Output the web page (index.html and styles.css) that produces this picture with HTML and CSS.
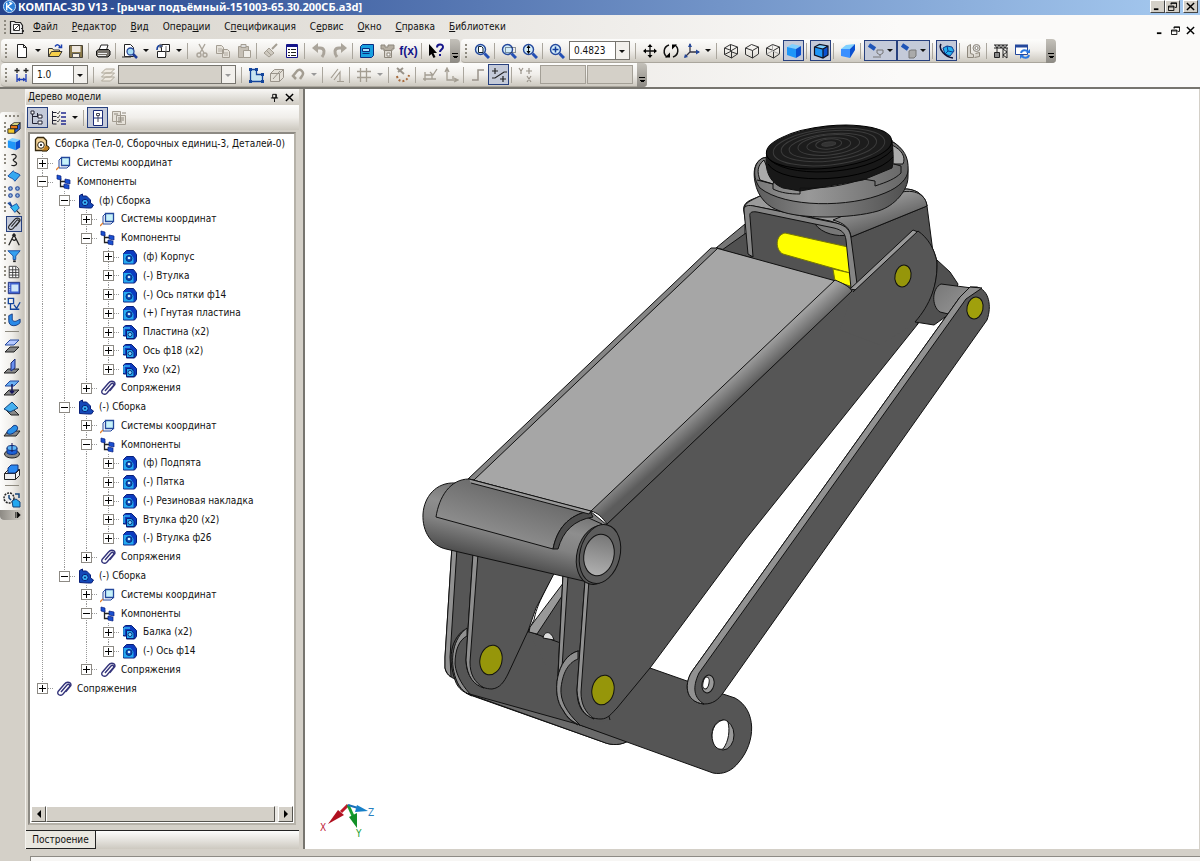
FILE: index.html
```
<!DOCTYPE html>
<html lang="ru">
    <head>
        <meta charset="UTF-8"/>
        <meta name="viewport" content="width=device-width, initial-scale=1">
        <title>КОМПАС-3D V13</title>
        <link rel="stylesheet" href="styles.css">
    </head>
    <body>
        <svg class="Sprite" aria-hidden="true">
            <!-- standard toolbar -->
            <symbol id="new" viewBox="0 0 16 16"><path d="M3.500 1.500h6l3 3v10h-9zM9.500 1.500v3h3" fill="#fff" stroke="#222"/></symbol>
            <symbol id="open" viewBox="0 0 16 16"><path d="M1.500 13.500v-8h4l1 1.500h6v2" fill="#ffe9a0" stroke="#333"/><path d="M1.500 13.500l3-5h10.500l-3 5z" fill="#f5cf4a" stroke="#333"/><path d="M8 3.500c2-2.500 4-2 5 .5M11.500 4.500h3v-3" fill="none" stroke="#1a3fb0" stroke-width="1.500"/></symbol>
            <symbol id="save" viewBox="0 0 16 16"><path d="M1.500 2.500h13v12h-13z" fill="#8a7a4a" stroke="#4a4436"/><path d="M4 3h8.500v6h-8.500z" fill="#eee8e0"/><path d="M4.500 10.500h7v4h-7z" fill="#f4efe4" stroke="#555"/></symbol>
            <symbol id="print" viewBox="0 0 16 16"><path d="M4 7l2-5h7l-1.500 5" fill="#fff" stroke="#222"/><path d="M1.500 8l2-1.500h10l1.500 1.500v4l-2 2h-10l-1.500-1.500z" fill="#77736c" stroke="#111"/><path d="M3 10.500h9M3 12.500h8" stroke="#eee"/></symbol>
            <symbol id="preview" viewBox="0 0 16 16"><path d="M2.500 1.500h6l3 3v9h-9z" fill="#fff" stroke="#222"/><circle cx="8.500" cy="8.500" r="3.500" fill="#a8dcf4" stroke="#2a4a9a" stroke-width="1.300"/><path d="M11 11l4 4" stroke="#1e3c96" stroke-width="2.500"/><path d="M0 14h9" stroke="#333"/></symbol>
            <symbol id="layout" viewBox="0 0 16 16"><path d="M6.500 1.500h8v7h-8zM2.500 8.500h8v6h-8z" fill="#fff" stroke="#222"/><path d="M2 7c0-4 2-5 4-4" fill="none" stroke="#123c9c" stroke-width="1.600"/><path d="M5 1l3 2-3 2zM11 3v10" fill="#123c9c" stroke="#777"/></symbol>
            <symbol id="cut" viewBox="0 0 16 16"><g fill="none" stroke="#aaa49a" stroke-width="1.400"><path d="M5 1l5 9M11 1l-5 9"/><circle cx="5" cy="12" r="2"/><circle cx="11" cy="12" r="2"/></g></symbol>
            <symbol id="copy" viewBox="0 0 16 16"><path d="M1.500 2.500h5l2 2v6h-7zM7.500 6.500h5l2 2v6h-7z" fill="#e6e2da" stroke="#a39d92"/><path d="M3 6h4M3 8h4M9 10h4M9 12h4" stroke="#b0aaa0"/></symbol>
            <symbol id="paste" viewBox="0 0 16 16"><path d="M2.500 3.500h10v11h-10z" fill="#c6c0b6" stroke="#a39d92"/><path d="M5 1.500h5v3h-5z" fill="#ddd" stroke="#a39d92"/><path d="M7.500 7.500h7v7h-7z" fill="#f0eee9" stroke="#a39d92"/></symbol>
            <symbol id="brush" viewBox="0 0 16 16"><path d="M14 1l-5 5" stroke="#a39d92" stroke-width="2"/><path d="M6 5l5 5-5 4-5-4z" fill="#cfcac0" stroke="#a39d92"/><path d="M4 8l4 4" stroke="#a39d92"/></symbol>
            <symbol id="props" viewBox="0 0 16 16"><path d="M2.500 1.500h11v13h-11z" fill="#fff" stroke="#15158a"/><path d="M3 2.500h10" stroke="#15158a" stroke-width="3"/><path d="M4 6.500h2M4 9.500h2M4 12.500h2M7 6.500h5M7 9.500h5M7 12.500h5" stroke="#222"/></symbol>
            <symbol id="undo" viewBox="0 0 16 16"><path d="M5 5h4c5 0 5 5 2 9" fill="none" stroke="#aaa49a" stroke-width="3"/><path d="M7 0v10l-6-5z" fill="#aaa49a"/></symbol>
            <symbol id="redo" viewBox="0 0 16 16"><path d="M11 5h-4c-5 0-5 5-2 9" fill="none" stroke="#aaa49a" stroke-width="3"/><path d="M9 0v10l6-5z" fill="#aaa49a"/></symbol>
            <symbol id="vars" viewBox="0 0 16 16"><path d="M1.500 3.500l2-2h11v11l-2 2h-11z" fill="#18a0e0" stroke="#0a2c80"/><path d="M3.500 5.500h7v3h-7zM3.500 10.500h7" fill="#a8e4ff" stroke="#0a2c80"/></symbol>
            <symbol id="part" viewBox="0 0 16 16"><path d="M1 2h4v2h3v-2h6v4h-2v2h-8v-2h-3z" fill="#b5aea2" stroke="#8d877c"/><path d="M4.500 7.500h7v7h-7z" fill="#ddd9d2" stroke="#8d877c"/><path d="M7 10h3v3h-3z" fill="#fff" stroke="#8d877c"/></symbol>
            <symbol id="help" viewBox="0 0 16 16"><path d="M1 1l8 9h-3.500l2 4-2 1-2-4-2.500 2z" fill="#000"/><path d="M9 4.500c0-4 6-4 6-.5 0 2.500-3 2.500-3 5" fill="none" stroke="#15158a" stroke-width="2"/><path d="M11 11h2v2h-2z" fill="#15158a"/></symbol>
            <!-- view toolbar -->
            <symbol id="lens" viewBox="0 0 16 16"><circle cx="6.500" cy="6.500" r="5" fill="#d3ecf8" stroke="#24489c" stroke-width="1.400"/><path d="M10.500 10.500l4.500 4.500" stroke="#2450b4" stroke-width="3"/></symbol>
            <symbol id="zpage" viewBox="0 0 16 16"><use href="#lens"/><path d="M4.500 3.500h3l1.500 1.500v4.500h-4.500z" fill="#fff" stroke="#123"/></symbol>
            <symbol id="zarea" viewBox="0 0 16 16"><use href="#lens"/><path d="M4.500 4.500h10v5h-10z" fill="none" stroke="#234" stroke-dasharray="1 1"/></symbol>
            <symbol id="zfit" viewBox="0 0 16 16"><use href="#lens"/><path d="M6.500 3v7" stroke="#111"/><path d="M4.500 5l2-3 2 3zM4.500 8l2 3 2-3z"/></symbol>
            <symbol id="zplus" viewBox="0 0 16 16"><use href="#lens"/><path d="M6.500 3.500v6M3.500 6.500h6" stroke="#123c9c" stroke-width="1.500"/></symbol>
            <symbol id="move" viewBox="0 0 16 16"><path d="M8 2v12M2 8h12" stroke="#111" stroke-width="1.300"/><path d="M8 1l2.500 3h-5zM8 15l2.500-3h-5zM1 8l3-2.500v5zM15 8l-3-2.500v5z"/></symbol>
            <symbol id="rotate" viewBox="0 0 16 16"><path d="M6 2c-6 2-6 9-2 12M10 14c6-2 6-9 2-12" fill="none" stroke="#111" stroke-width="1.500"/><path d="M2 14.500h5v-5zM14 1.500h-5v5z"/></symbol>
            <symbol id="axes" viewBox="0 0 16 16"><path d="M6 1v8l-5 5M6 9h9" fill="none" stroke="#334" stroke-width="1.300"/><path d="M4 4l2-4 2 4zM12 6.500l4 2.500-4 2.500zM0 15l1-4 3 3z" fill="#24489c"/></symbol>
            <symbol id="cube1" viewBox="0 0 16 16"><path d="M1.500 5l6-3.500 7 2.500v7l-6 4-7-3.500zM1.500 5l7 2.500 6-3.500M8.500 7.500v7.500M7.500 1.500v7l-6 3M7.500 8.500l7 2.500" fill="none" stroke="#333"/></symbol>
            <symbol id="cube2" viewBox="0 0 16 16"><path d="M1.500 5l6-3.500 7 2.500v7l-6 4-7-3.500zM1.500 5l7 2.500 6-3.500M8.500 7.500v7.500" fill="none" stroke="#333"/></symbol>
            <symbol id="cube3" viewBox="0 0 16 16"><use href="#cube2"/><path d="M7.500 2v6l-6 3M7.500 8l7 3" fill="none" stroke="#aaa"/></symbol>
            <symbol id="cube4" viewBox="0 0 16 16"><path d="M1 4l5-3 9 2-5 3z" fill="#7fd0ff"/><path d="M1 4l9 2v9l-9-3z" fill="#1e96f8"/><path d="M10 6l5-3v9l-5 3z" fill="#0a50d0"/></symbol>
            <symbol id="cube5" viewBox="0 0 16 16"><use href="#cube4"/><path d="M1.500 4l5-2.500 8.500 1.500v9l-5 3-8.500-3zM1.500 4l8.500 2 5-3M10 6v9" fill="none" stroke="#112" stroke-width="1.200"/></symbol>
            <symbol id="persp" viewBox="0 0 16 16"><path d="M1 6l5-4 9-1-5 5z" fill="#7fd0ff"/><path d="M1 6h9v9l-9-2z" fill="#3a90ff"/><path d="M10 6l5-5v6l-5 8z" fill="#0a50d0"/></symbol>
            <symbol id="hide1" viewBox="0 0 16 16"><path d="M1 2l6 4" stroke="#1f55b8" stroke-width="4"/><path d="M9 7h6v3l-3 2-3-2zM12 12v3M5 14h6" fill="none" stroke="#777"/></symbol>
            <symbol id="hide2" viewBox="0 0 16 16"><path d="M1 2l6 4" stroke="#1f55b8" stroke-width="4"/><path d="M8 8l2-1h5v6l-2 2h-5z" fill="#aaa" stroke="#777"/></symbol>
            <symbol id="orbit" viewBox="0 0 16 16"><path d="M4 5l4-2 5 1 2 4-4 5-5-2z" fill="#25b0ee" stroke="#0a3c90"/><path d="M8 3l1 5 5 1M9 8l-3 3" stroke="#0a3c90" fill="none"/><path d="M2 1c-3 5 4 13 12 14" fill="none" stroke="#113" stroke-width="1.500"/></symbol>
            <symbol id="sect" viewBox="0 0 16 16"><path d="M1.500 14.500v-11l3-2v9l3 1v3zM8.500 14.500l5-1v-4l-4 1" fill="#d8d4cc" stroke="#8d877c"/><circle cx="10.500" cy="5" r="3.500" fill="#ddd" stroke="#8d877c"/><circle cx="10.500" cy="5" r="1.500" fill="#fff" stroke="#8d877c"/></symbol>
            <symbol id="crane" viewBox="0 0 16 16"><path d="M1 2h14M1 5h14M2 2l2 3 2-3 2 3 2-3 2 3 2-3M10 5v10M14 5v10M10 6l4 3-4 3 4 3M4 5v4" fill="none" stroke="#222"/><path d="M1.500 9.500h5v5h-5z" fill="#888" stroke="#222"/></symbol>
            <symbol id="refresh" viewBox="0 0 16 16"><path d="M1.500 2.500h12v9h-12z" fill="#fff" stroke="#24489c"/><path d="M1 3h13" stroke="#24489c" stroke-width="3"/><path d="M7 10c1-4 6-3 7-1M15 12c-1 4-6 3-7 1" fill="none" stroke="#2a78e0" stroke-width="2"/><path d="M16 6v4h-4zM6 16v-4h4z" fill="#2a78e0"/></symbol>
            <!-- current state toolbar -->
            <symbol id="step" viewBox="0 0 16 16"><path d="M3 1v5M.500 3.500h5M12 1v5M9.500 3.500h5" stroke="#222" stroke-width="1.300"/><path d="M3 7v8M12 7v8M3 12.500h9" stroke="#1f3fb8" stroke-width="1.300"/><path d="M3 12.500l3-2v4zM12 12.500l-3-2v4z" fill="#1f3fb8"/></symbol>
            <symbol id="layers" viewBox="0 0 16 16"><path d="M1.500 14l4-4h9l-4 4zM1.500 10l4-4h9l-4 4zM1.500 6l4-4h9l-4 4z" fill="#eee9e0" stroke="#b0aa9c"/></symbol>
            <symbol id="sketch" viewBox="0 0 16 16"><path d="M2.500 2.500h6v5h6v7h-12z" fill="#c8e4f0" stroke="#14459c" stroke-width="1.300"/><path d="M1 1h3v3h-3zM7 1h3v3h-3zM13 6h3v3h-3zM13 13h3v3h-3zM1 13h3v3h-3z" fill="#14459c"/></symbol>
            <symbol id="edit3d" viewBox="0 0 16 16"><path d="M1.500 6.500l4-4h9v8l-4 4h-9zM1.500 6.500h9v8M10.500 6.500l4-4M4 12l7-8" fill="#e4e0d8" stroke="#99938a"/></symbol>
            <symbol id="magnet" viewBox="0 0 16 16"><path d="M6 12l-3-3 4-5c3-3 8 1 5 5l-2 3" fill="none" stroke="#a39d92" stroke-width="2.500"/></symbol>
            <symbol id="perp" viewBox="0 0 16 16"><path d="M2 11l7-9M5 13l6-8v9M8 14.500h7" fill="none" stroke="#a39d92" stroke-width="1.200"/></symbol>
            <symbol id="grid" viewBox="0 0 16 16"><path d="M4.500 1v14M10.500 1v14M1 4.500h14M1 10.500h14" stroke="#a39d92" stroke-width="1.300"/></symbol>
            <symbol id="round" viewBox="0 0 16 16"><path d="M2 1l7 6M3 5l5-4" stroke="#99938a" stroke-width="2"/><path d="M2 9c1 7 10 7 12-1" fill="none" stroke="#a86a3c" stroke-width="2" stroke-dasharray="2 2"/></symbol>
            <symbol id="ortho" viewBox="0 0 16 16"><path d="M3 5v9M1 12h13M3 8h7v4M8 5l3 3 4-6" fill="none" stroke="#a39d92" stroke-width="1.300"/></symbol>
            <symbol id="lcs" viewBox="0 0 16 16"><path d="M4 2v11h10M2 5l2-4 2 4M11 11l4 2-4 2M10 9v3" fill="none" stroke="#a39d92" stroke-width="1.300"/></symbol>
            <symbol id="corner" viewBox="0 0 16 16"><path d="M2 13h6v-10h6" fill="none" stroke="#99938a" stroke-width="1.500"/></symbol>
            <symbol id="snap" viewBox="0 0 16 16"><path d="M4 1v6M1 4h6M12 9v6M9 12h6M1 11h3l9-6h3" fill="none" stroke="#222" stroke-width="1.200"/></symbol>
            <symbol id="xy" viewBox="0 0 16 16"><path d="M1 1l2 3 2-3M3 4v3M11 1v6M8 4h6M9 9l4 6M13 9l-4 6" fill="none" stroke="#99938a" stroke-width="1.200"/></symbol>
            <!-- tree icons -->
            <symbol id="doc" viewBox="0 0 16 16"><path d="M1.500 14.500v-11l2-2h6l3 3v10z" fill="#f3d49a" stroke="#33270f" stroke-width="1.300"/><circle cx="7" cy="9" r="3.300" fill="#fff" stroke="#33270f"/><circle cx="7" cy="9" r="1" /><path d="M12 9l3 2v2l-2 2h-5" fill="#c08020" stroke="#33270f"/></symbol>
            <symbol id="docgray" viewBox="0 0 16 16"><path d="M1.500 14.500v-12h4l1 1h5l2 3v8z" fill="#eee" stroke="#222" stroke-width="1.200"/><path d="M4.500 5.500h6v6h-6z" fill="#fff" stroke="#333"/><path d="M5 11l5-5M12 9l3 3-3 3" fill="none" stroke="#333"/></symbol>
            <symbol id="cs" viewBox="0 0 16 16"><path d="M5.500 2.500h8v8h-8z" fill="#c6f2fa" stroke="#24489c" stroke-width="1.300"/><path d="M5 3l-2 2v8h8l2-2" fill="none" stroke="#24489c"/><path d="M0 15l3-3" stroke="#e08030" stroke-width="1.300"/></symbol>
            <symbol id="comp" viewBox="0 0 16 16"><path d="M4.500 4v8.500h4M4.500 7.500h5" fill="none" stroke="#222" stroke-width="1.300"/><path d="M1 1l4 1v4l-4-1zM9 5l5 1v4l-5-1zM8 10l5 1v4l-5-1z" fill="#1a4fd0" stroke="#0a2080" stroke-width=".700"/></symbol>
            <symbol id="asm" viewBox="0 0 16 16"><path d="M1.500 14.500v-12l3-1.500v2h4l4 4v3l3 2-2 3h-4z" fill="#1448b8" stroke="#081f78"/><circle cx="7" cy="9.500" r="3.200" fill="#38b0f4" stroke="#081f78"/><circle cx="7" cy="9.500" r="1" fill="#081f78"/></symbol>
            <symbol id="det" viewBox="0 0 16 16"><path d="M1.500 4.500l3-3h7l3 4v7l-2 2.500h-11z" fill="#0d3cc0" stroke="#081f78"/><path d="M1.500 5h7l3 4v5.500h-10z" fill="#25a8f0"/><circle cx="7" cy="9.500" r="3" fill="#0a48b8" stroke="#083080"/><circle cx="7" cy="9" r="1.300" fill="#d8f4ff"/></symbol>
            <symbol id="det2" viewBox="0 0 16 16"><path d="M1.500 12v-9l2-1.500h6l5 5v6l-2 2.500h-8v-3z" fill="#0d3cc0" stroke="#081f78"/><path d="M2 4h6M2 4v7" stroke="#38b4f4" stroke-width="1.400"/><path d="M4.500 6.500h5l2.500 3v5h-7.500z" fill="#25a8f0" stroke="#081f78"/><circle cx="8" cy="10.500" r="2" fill="#7cd8ff" stroke="#083080"/></symbol>
            <symbol id="clip" viewBox="0 0 16 16"><path d="M5 11l6-7c1.500-1.500 3.500 0 2.300 1.700l-6.500 7.500c-2.500 2.500-6.500 0-4.500-3l6-7c3-3.500 7.500-1.500 6.500 1.500l-5 6" fill="none" stroke="#33337a" stroke-width="1.400"/></symbol>
            <symbol id="treemode" viewBox="0 0 16 16"><path d="M2.500 1v12.500h5M2.500 6.500h5M7.500 3v4" fill="none" stroke="#223"/><path d="M1 1h3v3h-3zM8 5h4v3h-4zM8 11h4v3h-4z" fill="#fff" stroke="#223"/></symbol>
            <symbol id="listmode" viewBox="0 0 16 16"><path d="M1.500 1v13M1.500 2.500h4M1.500 6.500h4M1.500 10.500h4M1.500 14h4" stroke="#223"/><path d="M6 3l1 1 2-3M6 7l1 1 2-3M6 11l1 1 2-3" fill="none" stroke="#555"/><path d="M10 3h5M10 7h5M10 11h5M10 14h5" stroke="#222a90" stroke-width="1.600"/></symbol>
            <symbol id="page" viewBox="0 0 16 16"><path d="M3.500 .500h9v15h-9zM3.500 8h9" fill="#fff" stroke="#1c2c78"/><path d="M6.500 3.500h3v2h-3zM8 5v7" fill="none" stroke="#445"/></symbol>
            <symbol id="report" viewBox="0 0 16 16"><path d="M1.500 1.500h8v10h-8zM5.500 5.500h9v9h-9z" fill="#e6e2da" stroke="#a39d92"/><path d="M3 4h4M7 8h6M7 10h6M7 12h4M11 3h4" stroke="#8d877c"/></symbol>
            <!-- compact panel icons -->
            <symbol id="p1" viewBox="0 0 16 16"><path d="M4 5l4-3h7l-3 3z" fill="#ff9" stroke="#222"/><path d="M4 5h8v4h-8z" fill="#e87818" stroke="#222"/><path d="M1 9h8v5h-8z" fill="#f4c828" stroke="#222"/><path d="M12 5l3-3v7l-6 5v-5h3z" fill="#2a60d8" stroke="#222"/></symbol>
            <symbol id="p3" viewBox="0 0 16 16"><path d="M5 2c6-2 7 3 3 5-3 2 3 3 3 5s-3 3-6 2" fill="none" stroke="#222" stroke-width="1.400"/></symbol>
            <symbol id="p4" viewBox="0 0 16 16"><path d="M1 8l6-6c2 3 5 2 8 5l-6 7c-2-4-5-3-8-6z" fill="#35a8f0" stroke="#14459c"/></symbol>
            <symbol id="p5" viewBox="0 0 16 16"><g fill="#9bd" stroke="#24489c" stroke-width="1.300"><circle cx="4" cy="4" r="2"/><circle cx="12" cy="4" r="2"/><circle cx="4" cy="12" r="2"/><circle cx="12" cy="12" r="2"/></g></symbol>
            <symbol id="p6" viewBox="0 0 16 16"><path d="M1 2l8 8M3 1l3 6" stroke="#14459c" stroke-width="1.500"/><path d="M4 7l7-4 3 5-5 5z" fill="#35b8f0" stroke="#14459c"/><path d="M11 11l4 4" stroke="#222" stroke-width="1.500"/></symbol>
            <symbol id="p7" viewBox="0 0 16 16"><path d="M5 11l6-7c1.500-1.500 3.500 0 2.300 1.700l-6.500 7.500c-2.500 2.500-6.500 0-4.500-3l6-7c3-3.500 7.500-1.500 6.500 1.500l-5 6" fill="none" stroke="#222" stroke-width="1.200"/></symbol>
            <symbol id="p8" viewBox="0 0 16 16"><path d="M6 3l2-2 2 2M8 2l-6 12M8 2l6 12M6 7c2 2 3 2 4 0" fill="none" stroke="#222" stroke-width="1.500"/></symbol>
            <symbol id="p9" viewBox="0 0 16 16"><path d="M1 2h14l-5 6v4h-3v-4z" fill="#35a0f0" stroke="#14459c"/><path d="M7 13h3v2h-3z" fill="#222"/></symbol>
            <symbol id="p10" viewBox="0 0 16 16"><path d="M2.500 1.500h8l3 3v10h-11zM2.500 5.500h11M2.500 8.500h11M2.500 11.500h11M6.500 2v12M10 2v12" fill="#fff" stroke="#333"/></symbol>
            <symbol id="p11" viewBox="0 0 16 16"><path d="M1.500 1.500h13v13h-13z" fill="#3f62d0" stroke="#1c2c78"/><path d="M5 4h8v8h-8z" fill="#cfe6f8"/><path d="M3 3v10" stroke="#fff" stroke-dasharray="1 1"/></symbol>
            <symbol id="p12" viewBox="0 0 16 16"><path d="M1.500 1.500h6v6h-6zM4 8v6h10M8 9l3 4 4-7" fill="none" stroke="#14459c" stroke-width="1.500"/></symbol>
            <symbol id="p13" viewBox="0 0 16 16"><path d="M2 3l4-2v7c3 3 5 1 9-1v4c-4 5-13 5-13-2z" fill="#2a8ae8" stroke="#14357c"/></symbol>
            <symbol id="q1" viewBox="0 0 18 18"><path d="M2 8l5-5h9l-5 5z" fill="#b4c8ff" stroke="#24489c"/><path d="M2 15l5-5h9l-5 5z" fill="#888" stroke="#222"/></symbol>
            <symbol id="q2" viewBox="0 0 18 18"><path d="M1 15l4-4h11l-4 4z" fill="#888" stroke="#222"/><path d="M8 13v-8l4-4v9z" fill="#6a90f0" stroke="#1c2c78"/></symbol>
            <symbol id="q3" viewBox="0 0 18 18"><path d="M2 7l5-5h9l-5 5z" fill="#6ab0f4" stroke="#24489c"/><path d="M1 16l5-5h10l-5 5z" fill="#888" stroke="#222"/><path d="M9 5v9M7 12l2 2 2-2" fill="none" stroke="#14145c" stroke-width="1.500"/></symbol>
            <symbol id="q4" viewBox="0 0 18 18"><path d="M3 10l5 5h8l-5-5" fill="#888" stroke="#222"/><path d="M1 9l8-7 6 6-8 4z" fill="#45b0f0" stroke="#14457c"/></symbol>
            <symbol id="q5" viewBox="0 0 18 18"><path d="M1 15l4-5h12l-4 5z" fill="#888" stroke="#222"/><path d="M4 12c0-4 3-3 6-7 3-2 6 1 4 4-3 3-7 6-10 3z" fill="#2a90e8" stroke="#14357c"/></symbol>
            <symbol id="q6" viewBox="0 0 18 18"><ellipse cx="9" cy="12" rx="7.500" ry="4" fill="#888" stroke="#222"/><path d="M4 6v5c2 2 8 2 10 0v-5z" fill="#1c60d8" stroke="#14357c"/><ellipse cx="9" cy="6" rx="5" ry="2.500" fill="#60b8f8" stroke="#14357c"/><path d="M9 1v9" stroke="#14145c"/></symbol>
            <symbol id="q7" viewBox="0 0 18 18"><path d="M1.500 10.500l4-4h11v6l-4 4h-11zM1.500 10.500h11v6M12.500 10.500l4-4" fill="#eee" stroke="#222"/><path d="M5 9v-4l3-3h7v5l-3 3h-7z" fill="#2a88f0" stroke="#14357c"/></symbol>
            <symbol id="q8" viewBox="0 0 18 18"><circle cx="6" cy="7" r="5" fill="#eee" stroke="#222" stroke-width="1.500" stroke-dasharray="2 1"/><path d="M6 4v3l2 2M12 3h4v4" fill="none" stroke="#14457c" stroke-width="1.500"/><path d="M9 10l4-2 4 3v5h-7z" fill="#22a8f0" stroke="#14457c"/></symbol>
        </svg>

        <header class="Title">
            <svg viewBox="0 0 14 14"><circle cx="7" cy="7" r="6.500" fill="#2a7fd8" stroke="#cfe8ff"/><path d="M4 3v8M10 3l-5 4 5 4M7 2l2 3" fill="none" stroke="#fff" stroke-width="1.500"/></svg>
            <h1>КОМПАС-3D V13 - [рычаг подъёмный-151003-65.30.200СБ.a3d]</h1>
            <div class="Caption">
                <button aria-label="Свернуть"><svg viewBox="0 0 10 10"><path d="M1 8h5" stroke="#000" stroke-width="2"/></svg></button>
                <button aria-label="Восстановить"><svg viewBox="0 0 10 10"><path d="M3.500 3v-2h6v5h-2M3 1.500h7M.500 4.500h6v5h-6zM0 5.500h7" fill="none" stroke="#000"/></svg></button>
                <button class="Close" aria-label="Закрыть"><svg viewBox="0 0 10 10"><path d="M1 1l8 8M9 1l-8 8" stroke="#000" stroke-width="1.600"/></svg></button>
            </div>
        </header>
        <div class="Chrome">
            <nav class="Menu">
                <i class="Grip"></i>
                <svg class="Icon"><use href="#docgray"/></svg>
                <button><u>Ф</u>айл</button>
                <button><u>Р</u>едактор</button>
                <button><u>В</u>ид</button>
                <button>Опера<u>ц</u>ии</button>
                <button>С<u>п</u>ецификация</button>
                <button>С<u>е</u>рвис</button>
                <button><u>О</u>кно</button>
                <button><u>С</u>правка</button>
                <button><u>Б</u>иблиотеки</button>
                <div class="Caption Flat">
                    <button aria-label="Свернуть документ"><svg viewBox="0 0 10 10"><path d="M1 8h5" stroke="#000" stroke-width="2"/></svg></button>
                    <button aria-label="Восстановить документ"><svg viewBox="0 0 10 10"><path d="M3.500 3v-2h6v5h-2M3 1.500h7M.500 4.500h6v5h-6zM0 5.500h7" fill="none" stroke="#000"/></svg></button>
                    <button aria-label="Закрыть документ"><svg viewBox="0 0 10 10"><path d="M1 1l8 8M9 1l-8 8" stroke="#000" stroke-width="1.600"/></svg></button>
                </div>
            </nav>
            <div class="Bars">
                <div class="Bar" role="toolbar" aria-label="Стандартная">
                    <i class="Grip"></i>
                    <button class="Tool" aria-label="Создать"><svg class="Icon"><use href="#new"/></svg></button><button class="Drop" aria-label="Ещё"></button>
                    <button class="Tool" aria-label="Открыть"><svg class="Icon"><use href="#open"/></svg></button>
                    <button class="Tool" aria-label="Сохранить"><svg class="Icon"><use href="#save"/></svg></button>
                    <i class="Sep"></i>
                    <button class="Tool" aria-label="Печать"><svg class="Icon"><use href="#print"/></svg></button>
                    <i class="Sep"></i>
                    <button class="Tool" aria-label="Просмотр"><svg class="Icon"><use href="#preview"/></svg></button><button class="Drop" aria-label="Ещё"></button>
                    <button class="Tool" aria-label="Компоновка"><svg class="Icon"><use href="#layout"/></svg></button><button class="Drop" aria-label="Ещё"></button>
                    <i class="Sep"></i>
                    <button class="Tool" aria-label="Вырезать"><svg class="Icon"><use href="#cut"/></svg></button>
                    <button class="Tool" aria-label="Копировать"><svg class="Icon"><use href="#copy"/></svg></button>
                    <button class="Tool" aria-label="Вставить"><svg class="Icon"><use href="#paste"/></svg></button>
                    <i class="Sep"></i>
                    <button class="Tool" aria-label="Копировать свойства"><svg class="Icon"><use href="#brush"/></svg></button>
                    <button class="Tool" aria-label="Свойства"><svg class="Icon"><use href="#props"/></svg></button>
                    <i class="Sep"></i>
                    <button class="Tool" aria-label="Отменить"><svg class="Icon"><use href="#undo"/></svg></button>
                    <button class="Tool" aria-label="Повторить"><svg class="Icon"><use href="#redo"/></svg></button>
                    <i class="Sep"></i>
                    <button class="Tool" aria-label="Менеджер библиотек"><svg class="Icon"><use href="#vars"/></svg></button>
                    <button class="Tool" aria-label="Деталь"><svg class="Icon"><use href="#part"/></svg></button>
                    <button class="Tool Fx" aria-label="Переменные">f(x)</button>
                    <i class="Sep"></i>
                    <button class="Tool" aria-label="Справка"><svg class="Icon"><use href="#help"/></svg></button>
                    <button class="End" aria-label="Настройка панели"></button>
                </div>
                <div class="Bar" role="toolbar" aria-label="Вид">
                    <i class="Grip"></i>
                    <button class="Tool" aria-label="Показать всё"><svg class="Icon"><use href="#zpage"/></svg></button>
                    <i class="Sep"></i>
                    <button class="Tool" aria-label="Увеличить рамкой"><svg class="Icon"><use href="#zarea"/></svg></button>
                    <button class="Tool" aria-label="Приблизить"><svg class="Icon"><use href="#zfit"/></svg></button>
                    <i class="Sep"></i>
                    <button class="Tool" aria-label="Масштаб"><svg class="Icon"><use href="#zplus"/></svg></button>
                    <span class="Combo Scale"><select aria-label="Текущий масштаб"><option>0.4823</option></select></span>
                    <i class="Sep"></i>
                    <button class="Tool" aria-label="Сдвинуть"><svg class="Icon"><use href="#move"/></svg></button>
                    <button class="Tool" aria-label="Повернуть"><svg class="Icon"><use href="#rotate"/></svg></button>
                    <button class="Tool" aria-label="Ориентация"><svg class="Icon"><use href="#axes"/></svg></button><button class="Drop" aria-label="Ещё"></button>
                    <i class="Sep"></i>
                    <button class="Tool" aria-label="Каркас"><svg class="Icon"><use href="#cube1"/></svg></button>
                    <button class="Tool" aria-label="Без невидимых линий"><svg class="Icon"><use href="#cube2"/></svg></button>
                    <button class="Tool" aria-label="Невидимые тонкие"><svg class="Icon"><use href="#cube3"/></svg></button>
                    <button class="Tool On" aria-label="Полутоновое"><svg class="Icon"><use href="#cube4"/></svg></button>
                    <i class="Sep"></i>
                    <button class="Tool On" aria-label="Полутоновое с каркасом"><svg class="Icon"><use href="#cube5"/></svg></button>
                    <i class="Sep"></i>
                    <button class="Tool" aria-label="Перспектива"><svg class="Icon"><use href="#persp"/></svg></button>
                    <i class="Sep"></i>
                    <button class="Tool On Wide" aria-label="Скрыть"><svg class="Icon"><use href="#hide1"/></svg><i class="Arrow"></i></button>
                    <button class="Tool On Wide" aria-label="Скрыть все"><svg class="Icon"><use href="#hide2"/></svg><i class="Arrow"></i></button>
                    <i class="Sep"></i>
                    <button class="Tool On" aria-label="Упрощённое"><svg class="Icon"><use href="#orbit"/></svg></button>
                    <i class="Sep"></i>
                    <button class="Tool" aria-label="Разнести"><svg class="Icon"><use href="#sect"/></svg></button>
                    <i class="Sep"></i>
                    <button class="Tool" aria-label="Перестроить"><svg class="Icon"><use href="#crane"/></svg></button>
                    <button class="Tool" aria-label="Обновить"><svg class="Icon"><use href="#refresh"/></svg></button>
                    <button class="End Apart" aria-label="Настройка панели"></button>
                </div>
            </div>
            <div class="Bars">
                <div class="Bar" role="toolbar" aria-label="Текущее состояние">
                    <i class="Grip"></i>
                    <button class="Tool" aria-label="Шаг курсора"><svg class="Icon"><use href="#step"/></svg></button>
                    <span class="Combo Step"><select aria-label="Шаг"><option>1.0</option></select></span>
                    <i class="Sep"></i>
                    <button class="Tool" aria-label="Слои"><svg class="Icon"><use href="#layers"/></svg></button>
                    <span class="Combo Layer"><select aria-label="Слой" disabled><option></option></select></span>
                    <i class="Sep"></i>
                    <button class="Tool" aria-label="Эскиз"><svg class="Icon"><use href="#sketch"/></svg></button>
                    <button class="Tool" aria-label="Редактировать на месте"><svg class="Icon"><use href="#edit3d"/></svg></button>
                    <button class="Tool" aria-label="Привязки"><svg class="Icon"><use href="#magnet"/></svg></button><button class="Drop Off" aria-label="Ещё"></button>
                    <i class="Sep"></i>
                    <button class="Tool" aria-label="Нормаль"><svg class="Icon"><use href="#perp"/></svg></button>
                    <i class="Sep"></i>
                    <button class="Tool" aria-label="Сетка"><svg class="Icon"><use href="#grid"/></svg></button><button class="Drop Off" aria-label="Ещё"></button>
                    <i class="Sep"></i>
                    <button class="Tool" aria-label="Округление"><svg class="Icon"><use href="#round"/></svg></button>
                    <i class="Sep"></i>
                    <button class="Tool" aria-label="Ортогональное"><svg class="Icon"><use href="#ortho"/></svg></button>
                    <button class="Tool" aria-label="Система координат"><svg class="Icon"><use href="#lcs"/></svg></button>
                    <i class="Sep"></i>
                    <button class="Tool" aria-label="Угол"><svg class="Icon"><use href="#corner"/></svg></button>
                    <button class="Tool On" aria-label="Точки"><svg class="Icon"><use href="#snap"/></svg></button>
                    <i class="Sep"></i>
                    <button class="Tool" aria-label="Координаты"><svg class="Icon"><use href="#xy"/></svg></button>
                    <div class="Coords">
                        <input aria-label="X" disabled>
                        <input aria-label="Y" disabled>
                    </div>
                    <button class="End" aria-label="Настройка панели"></button>
                </div>
            </div>
        </div>

        <main class="Work">
            <aside class="Compact" role="toolbar" aria-label="Компактная панель">
                <div class="Strip">
                    <i class="TopGrip"></i>
                    <button class="Mode" aria-label="Редактирование сборки"><svg><use href="#p1"/></svg></button>
                    <button class="Mode" aria-label="Редактирование детали"><svg><use href="#cube4"/></svg></button>
                    <button class="Mode" aria-label="Кривые"><svg><use href="#p3"/></svg></button>
                    <button class="Mode" aria-label="Поверхности"><svg><use href="#p4"/></svg></button>
                    <button class="Mode" aria-label="Массивы"><svg><use href="#p5"/></svg></button>
                    <button class="Mode" aria-label="Вспомогательная геометрия"><svg><use href="#p6"/></svg></button>
                    <button class="Mode On" aria-label="Сопряжения"><svg><use href="#p7"/></svg></button>
                    <button class="Mode" aria-label="Измерения"><svg><use href="#p8"/></svg></button>
                    <button class="Mode" aria-label="Фильтры"><svg><use href="#p9"/></svg></button>
                    <button class="Mode" aria-label="Спецификация"><svg><use href="#p10"/></svg></button>
                    <button class="Mode" aria-label="Отчёты"><svg><use href="#p11"/></svg></button>
                    <button class="Mode" aria-label="Элементы оформления"><svg><use href="#p12"/></svg></button>
                    <button class="Mode" aria-label="Листовое тело"><svg><use href="#p13"/></svg></button>
                    <hr>
                    <button class="Mate" aria-label="Параллельность"><svg><use href="#q1"/></svg></button>
                    <button class="Mate" aria-label="Перпендикулярность"><svg><use href="#q2"/></svg></button>
                    <button class="Mate" aria-label="На расстоянии"><svg><use href="#q3"/></svg></button>
                    <button class="Mate" aria-label="Под углом"><svg><use href="#q4"/></svg></button>
                    <button class="Mate" aria-label="Касание"><svg><use href="#q5"/></svg></button>
                    <button class="Mate" aria-label="Соосность"><svg><use href="#q6"/></svg></button>
                    <button class="Mate" aria-label="Совпадение"><svg><use href="#q7"/></svg></button>
                    <hr>
                    <button class="Mate" aria-label="Механическая передача"><svg><use href="#q8"/></svg></button>
                    <div class="Foot"><svg viewBox="0 0 8 8"><path d="M1 0v8M3 0l4 4-4 4z" stroke="#000"/></svg></div>
                </div>
            </aside>

            <section class="Panel">
                <header>
                    <h2>Дерево модели</h2>
                    <button aria-label="Закрепить"><svg viewBox="0 0 10 10"><path d="M3 1.500h4v4h-4zM1 5.500h8M5 6v4M6.500 1.500v4" fill="none" stroke="#000"/></svg></button>
                    <button aria-label="Закрыть панель"><svg viewBox="0 0 10 10"><path d="M1 1l8 8M9 1l-8 8" stroke="#000" stroke-width="1.600"/></svg></button>
                </header>
                <div class="PanelBar">
                    <button class="Tool On" aria-label="Структура"><svg class="Icon"><use href="#treemode"/></svg></button>
                    <button class="Tool" aria-label="Состав"><svg class="Icon"><use href="#listmode"/></svg></button><button class="Drop" aria-label="Ещё"></button>
                    <i class="Sep"></i>
                    <button class="Tool On" aria-label="Дополнительное окно"><svg class="Icon"><use href="#page"/></svg></button>
                    <button class="Tool" aria-label="Отчёт"><svg class="Icon"><use href="#report"/></svg></button>
                </div>
                <div class="TreeBox">
                    <!-- i = vertical guide, i.N = empty column, b = expander column -->
                    <ul class="Tree" role="tree">
                        <li><svg><use href="#doc"/></svg><span>Сборка (Тел-0, Сборочных единиц-3, Деталей-0)</span></li>
                        <li><b><button aria-label="Развернуть" class="Plus"></button></b><svg><use href="#cs"/></svg><span>Системы координат</span></li>
                        <li><b><button aria-label="Свернуть"></button></b><svg><use href="#comp"/></svg><span>Компоненты</span></li>
                        <li><i></i><b><button aria-label="Свернуть"></button></b><svg><use href="#asm"/></svg><span>(ф) Сборка</span></li>
                        <li><i></i><i></i><b><button aria-label="Развернуть" class="Plus"></button></b><svg><use href="#cs"/></svg><span>Системы координат</span></li>
                        <li><i></i><i></i><b><button aria-label="Свернуть"></button></b><svg><use href="#comp"/></svg><span>Компоненты</span></li>
                        <li><i></i><i></i><i></i><b><button aria-label="Развернуть" class="Plus"></button></b><svg><use href="#det"/></svg><span>(ф) Корпус</span></li>
                        <li><i></i><i></i><i></i><b><button aria-label="Развернуть" class="Plus"></button></b><svg><use href="#det"/></svg><span>(-) Втулка</span></li>
                        <li><i></i><i></i><i></i><b><button aria-label="Развернуть" class="Plus"></button></b><svg><use href="#det"/></svg><span>(-) Ось пятки ф14</span></li>
                        <li><i></i><i></i><i></i><b><button aria-label="Развернуть" class="Plus"></button></b><svg><use href="#det"/></svg><span>(+) Гнутая пластина</span></li>
                        <li><i></i><i></i><i></i><b><button aria-label="Развернуть" class="Plus"></button></b><svg><use href="#det2"/></svg><span>Пластина (x2)</span></li>
                        <li><i></i><i></i><i></i><b><button aria-label="Развернуть" class="Plus"></button></b><svg><use href="#det2"/></svg><span>Ось ф18 (x2)</span></li>
                        <li><i></i><i></i><i></i><b class="Last"><button aria-label="Развернуть" class="Plus"></button></b><svg><use href="#det2"/></svg><span>Ухо (x2)</span></li>
                        <li><i></i><i></i><b class="Last"><button aria-label="Развернуть" class="Plus"></button></b><svg><use href="#clip"/></svg><span>Сопряжения</span></li>
                        <li><i></i><b><button aria-label="Свернуть"></button></b><svg><use href="#asm"/></svg><span>(-) Сборка</span></li>
                        <li><i></i><i></i><b><button aria-label="Развернуть" class="Plus"></button></b><svg><use href="#cs"/></svg><span>Системы координат</span></li>
                        <li><i></i><i></i><b><button aria-label="Свернуть"></button></b><svg><use href="#comp"/></svg><span>Компоненты</span></li>
                        <li><i></i><i></i><i></i><b><button aria-label="Развернуть" class="Plus"></button></b><svg><use href="#det"/></svg><span>(ф) Подпята</span></li>
                        <li><i></i><i></i><i></i><b><button aria-label="Развернуть" class="Plus"></button></b><svg><use href="#det"/></svg><span>(-) Пятка</span></li>
                        <li><i></i><i></i><i></i><b><button aria-label="Развернуть" class="Plus"></button></b><svg><use href="#det"/></svg><span>(-) Резиновая накладка</span></li>
                        <li><i></i><i></i><i></i><b><button aria-label="Развернуть" class="Plus"></button></b><svg><use href="#det2"/></svg><span>Втулка ф20 (x2)</span></li>
                        <li><i></i><i></i><i></i><b class="Last"><button aria-label="Развернуть" class="Plus"></button></b><svg><use href="#det"/></svg><span>(-) Втулка ф26</span></li>
                        <li><i></i><i></i><b class="Last"><button aria-label="Развернуть" class="Plus"></button></b><svg><use href="#clip"/></svg><span>Сопряжения</span></li>
                        <li><i></i><b class="Last"><button aria-label="Свернуть"></button></b><svg><use href="#asm"/></svg><span>(-) Сборка</span></li>
                        <li><i></i><i class="N"></i><b><button aria-label="Развернуть" class="Plus"></button></b><svg><use href="#cs"/></svg><span>Системы координат</span></li>
                        <li><i></i><i class="N"></i><b><button aria-label="Свернуть"></button></b><svg><use href="#comp"/></svg><span>Компоненты</span></li>
                        <li><i></i><i class="N"></i><i></i><b><button aria-label="Развернуть" class="Plus"></button></b><svg><use href="#det2"/></svg><span>Балка (x2)</span></li>
                        <li><i></i><i class="N"></i><i></i><b class="Last"><button aria-label="Развернуть" class="Plus"></button></b><svg><use href="#det"/></svg><span>(-) Ось ф14</span></li>
                        <li><i></i><i class="N"></i><b class="Last"><button aria-label="Развернуть" class="Plus"></button></b><svg><use href="#clip"/></svg><span>Сопряжения</span></li>
                        <li><b class="Last"><button aria-label="Развернуть" class="Plus"></button></b><svg><use href="#clip"/></svg><span>Сопряжения</span></li>
                    </ul>
                    <div class="Scroll">
                        <button aria-label="Влево"><svg viewBox="0 0 8 8"><path d="M6 0v8l-4-4z"/></svg></button>
                        <div class="Thumb"></div>
                        <button aria-label="Вправо"><svg viewBox="0 0 8 8"><path d="M2 0v8l4-4z"/></svg></button>
                    </div>
                </div>
                <div class="Tabs"><button>Построение</button></div>
            </section>

            <section class="View">
                <svg class="Model" viewBox="305 89 894 760" preserveAspectRatio="xMinYMin meet" role="img" aria-label="Рычаг подъёмный">
                    <defs>
                        <linearGradient id="gTube" gradientUnits="userSpaceOnUse" x1="520" y1="493" x2="502" y2="566"><stop offset="0" stop-color="#6c6c6c"/><stop offset=".35" stop-color="#8e8e8e"/><stop offset=".6" stop-color="#828282"/><stop offset="1" stop-color="#484848"/></linearGradient>
                        <linearGradient id="gWrap" gradientUnits="userSpaceOnUse" x1="520" y1="490" x2="505" y2="540"><stop offset="0" stop-color="#6a6a6a"/><stop offset="1" stop-color="#8e8e8e"/></linearGradient>
                        <linearGradient id="gBend" gradientUnits="userSpaceOnUse" x1="712" y1="392" x2="726" y2="408"><stop offset="0" stop-color="#a0a0a0"/><stop offset="1" stop-color="#5c5c5c"/></linearGradient>
                        <linearGradient id="gCap" gradientUnits="userSpaceOnUse" x1="870" y1="200" x2="880" y2="232"><stop offset="0" stop-color="#9a9a9a"/><stop offset="1" stop-color="#5a5a5a"/></linearGradient>
                        <linearGradient id="gDish" x1="0" y1="0" x2="1" y2="0"><stop offset="0" stop-color="#777"/><stop offset=".35" stop-color="#999"/><stop offset="1" stop-color="#666"/></linearGradient>
                        <linearGradient id="gDish2" x1="0" y1="0" x2="1" y2="0"><stop offset="0" stop-color="#5c5c5c"/><stop offset=".4" stop-color="#858585"/><stop offset="1" stop-color="#505050"/></linearGradient>
                        <linearGradient id="gHole" x1="0" y1="0" x2="0" y2="1"><stop offset="0" stop-color="#777"/><stop offset="1" stop-color="#b0b0b0"/></linearGradient>
                        <linearGradient id="gPin" x1="0" y1="0" x2="1" y2="1"><stop offset="0" stop-color="#777"/><stop offset="1" stop-color="#999"/></linearGradient>
                    </defs>
                    <g stroke="#111" stroke-width="1" stroke-linejoin="round">
                        <!-- far cheek and its beam -->
                        <path d="M452 546L445 657V668C446 674 450 677 455 679L490 690L520 560Z" fill="#565656"/>
                        <path d="M452 546L445 657V668C446 672 448 675 451 677L450 657L457 548Z" fill="#919191"/>
                        <path d="M464 630C450 640 448 660 455 680C458 690 466 693 470 695L603 742C612 746 622 745 630 740L600 700L530 632Z" fill="#555"/>
                        <path d="M467 628C453 638 449 660 456 679C460 690 466 693 472 696C464 688 456 676 455 664C455 650 459 640 467 636Z" fill="#919191"/>
                        <path d="M466 693L603 742C612 746 622 745 628 741L577 724Z" fill="#6a6a6a"/>
                        <!-- near beam -->
                        <path d="M577 724L713 773C723 775 732 771 739 762C756 742 757 710 735 698L723 694L687 681L650 668L580 660L560 642L528 631" fill="#555"/>
                        <path d="M528 631L565 578L566 645Z" fill="#555"/>
                        <path d="M566 570L556 568C544 594 537 604 534 620L528 631L563 587Z" fill="#fff"/>
                        <path d="M564 582L530 627L529 632L537 634L564 593Z" fill="#999"/>
                        <path d="M543 638C544 631 551 630 554 640Z" fill="#ddd"/>
                        <ellipse cx="723" cy="735" rx="11" ry="15" fill="#999"/>
                        <path d="M723 720C714 722 710 733 713 742C715 748 719 750 723 749C729 741 730 730 728 722C726 720 725 720 723 720Z" fill="#fff"/>
                        <!-- left leg -->
                        <path d="M473 553L466 660C466 680 480 689 492 689C500 688 504 682 508 674L528 631L536 608L557 568L500 550Z" fill="#565656"/>
                        <path d="M473 553L466 660C467 677 474 685 484 688C474 682 470 674 470 662L478 554Z" fill="#8e8e8e"/>
                        <ellipse cx="491" cy="660" rx="11" ry="15" fill="#96960a" transform="rotate(12 491 660)"/>
                        <!-- right leg with side plate -->
                        <path d="M563 574L558 673L560 690L575 690L590 580Z" fill="#565656"/>
                        <path d="M563 574L558 676L562 668L568 576Z" fill="#8e8e8e"/>
                        <path d="M578 725C572 722 567 718 563 710C551 695 556 657 578 651L590 650L610 720" fill="#555"/>
                        <path d="M578 651C556 657 551 695 563 710C568 719 573 722 580 725C566 712 560 700 561 688C563 670 570 662 578 659Z" fill="#8e8e8e"/>
                        <!-- near cheek -->
                        <path d="M585 580L577 690C577 710 586 719 601 719C608 719 612 713 617 708L650 668L745 540L917 325C930 305 938 285 937 262C934 248 928 238 917 230L852 290L607 524Z" fill="#565656"/>
                        <path d="M585 580L577 690C578 706 583 715 594 719C585 712 581 704 581 692L589 580Z" fill="#919191"/>
                        <ellipse cx="603" cy="690" rx="11" ry="15" fill="#96960a" transform="rotate(12 603 690)"/>
                        <!-- bracket under the pad -->
                        <path d="M716 248L745 224V236L726 250Z" fill="#777"/>
                        <path d="M722 250L746 233L752 258Z" fill="#505050"/>
                        <path d="M744 212C742 204 748 201 753 199L765 194L907 189C918 190 925 196 927 206L934 260L856 290L752 262Z" fill="#525252"/>
                        <path d="M745 207C745 203 750 201 760 196L907 189C918 190 925 196 927 206L851 237C848 227 846 226 830 221L753 206Z" fill="#9a9a9a"/>
                        <path d="M833 220L898 193C915 188 926 195 927 206L851 237C850 228 844 223 833 220Z" fill="url(#gCap)"/>
                        <path d="M815 224C822 234 838 237 848 235L832 222Z" fill="#777"/>
                        <path d="M785 233L848 247L850 273L783 254C775 250 775 235 785 233Z" fill="#ff0" stroke="#770"/>
                        <path d="M833 269L850 273L853 287L835 281Z" fill="#ff0" stroke="#770"/>
                        <path d="M744 210C744 205 749 205 754 206L836 223C847 226 850 230 851 238L857 284L851 288L846 240C845 233 842 230 834 228L757 212C751 211 749 213 750 217L753 257L748 254Z" fill="#858585"/>
                        <!-- near cheek head -->
                        <path d="M913 230L850 289L856 290L918 232Z" fill="#999"/>
                        <path d="M918 231L853 292L840 330L880 345L917 322C930 305 938 285 937 262C934 248 928 238 918 231Z" fill="#565656" stroke="none"/>
                        <path d="M853 292L918 231C928 238 934 248 937 262C938 285 930 305 917 325" fill="none"/>
                        <ellipse cx="903" cy="276" rx="8" ry="11" fill="#96960a" transform="rotate(12 903 276)"/>
                        <!-- top plate -->
                        <path d="M716 248L836 281L592 512L469 479Z" fill="#a6a6a6"/>
                        <path d="M711 248L718 248L474 480L468 479Z" fill="#858585"/>
                        <path d="M835 280C842 283 849 286 852 291L607 524C602 517 598 513 591 511Z" fill="url(#gBend)"/>
                        <!-- tube -->
                        <path d="M590 511L607 525L600 535L560 525Z" fill="#808080"/>
                        <path d="M455 483C436 482 424 497 423 514C422 532 432 546 446 549L592 583L602 524L560 505Z" fill="url(#gTube)" />
                        <path d="M469 479C450 479 439 497 436 517L553 549C557 529 568 515 590 511Z" fill="url(#gWrap)"/>
                        <path d="M553 549C557 529 568 515 590 511L593 517C574 520 563 531 558 549Z" fill="#4c4c4c"/>
                        <path d="M469 479L591 511L589 514L471 483" fill="#999"/>
                        <ellipse cx="597" cy="555" rx="20" ry="30" fill="#555" transform="rotate(14 597 555)"/>
                        <ellipse cx="600" cy="554" rx="20" ry="30" fill="#5c5c5c" transform="rotate(14 600 554)"/>
                        <ellipse cx="599" cy="555" rx="15" ry="21" fill="url(#gHole)" transform="rotate(12 599 555)"/>
                        <!-- axle and link rod -->
                        <path d="M937 260L950 272L958 284L948 315L934 325L915 322C930 305 938 285 937 260Z" fill="#505050"/>
                        <path d="M941 284L972 288L965 318L940 312C931 306 932 288 941 284Z" fill="url(#gPin)"/>
                        <path d="M970 287L960 297L693 670C684 682 684 702 704 704C713 704 718 700 723 693L987 320C992 306 989 290 977 287Z" fill="#565656"/>
                        <path d="M970 287L960 297L693 670C684 682 684 702 704 704C694 698 692 688 699 673L966 299L982 288Z" fill="#919191"/>
                        <ellipse cx="975" cy="308" rx="8" ry="11" fill="#a0a00c" transform="rotate(12 975 308)"/>
                        <ellipse cx="708" cy="684" rx="6" ry="9" fill="#999" transform="rotate(12 708 684)"/>
                        <ellipse cx="706" cy="683" rx="3" ry="6" fill="#fff" transform="rotate(12 706 683)"/>
                        <!-- dish and rubber pad -->
                        <path d="M763 158C754 162 753 172 755 182C758 198 768 207 780 211C800 219 850 219 878 211C895 206 908 190 908 177C909 160 903 148 893 142Z" fill="url(#gDish2)"/>
                        <path d="M763 158C753 162 752 178 760 188C785 208 850 208 885 193C900 187 908 178 908 170C909 157 903 148 893 142Z" fill="url(#gDish)"/>
                        <path d="M764 160C757 166 757 172 760 180L773 184L775 178L769 172ZM892 145C902 150 906 157 903 164L893 164Z" fill="#aaa"/>
                        <path d="M767 152C764 168 768 182 783 188L800 191L863 180L892 168C894 160 893 150 892 140Z" fill="#181818"/>
                        <path d="M757 180L773 184V189C781 193 790 194 800 194V188C825 189 845 185 863 179L875 181V186C887 182 895 179 901 173V166L894 164" fill="none"/>
                        <path d="M767 156C780 180 870 176 892 150M768 164C782 187 872 182 893 157" fill="none" stroke="#000"/>
                        <g fill="#1c1c1c" stroke="#3c3c3c" transform="rotate(-6 829 147)">
                            <ellipse cx="829" cy="147" rx="63" ry="21" stroke="#000"/>
                            <ellipse cx="829" cy="147" rx="56" ry="18"/>
                            <ellipse cx="829" cy="146" rx="48" ry="15"/>
                            <ellipse cx="829" cy="146" rx="40" ry="12"/>
                            <ellipse cx="829" cy="145" rx="31" ry="10"/>
                            <ellipse cx="829" cy="145" rx="22" ry="7"/>
                            <ellipse cx="829" cy="144" rx="13" ry="5"/>
                            <ellipse cx="829" cy="144" rx="7" ry="2" fill="#333"/>
                        </g>
                    </g>
                    <!-- axes triad -->
                    <path d="M348 805L341 812" stroke="#c01828" stroke-width="3"/><path d="M338 810L344 815L328 824Z" fill="#b01020"/>
                    <path d="M348 805L353 816" stroke="#18a030" stroke-width="3"/><path d="M349 817L357 813L357 828Z" fill="#129028"/>
                    <path d="M348 805L358 808" stroke="#1a70b8" stroke-width="2"/><path d="M357 805L368 811L355 812Z" fill="#1880c8"/>
                    <text class="Axis" x="320" y="831" fill="#c02038">X</text>
                    <text class="Axis" x="356" y="837" fill="#18a030">Y</text>
                    <text class="Axis" x="368" y="816" fill="#2880c0">Z</text>
                </svg>
            </section>
        </main>
        <footer class="Status"><div></div></footer>
    </body>
</html>
```
FILE: styles.css
```
*
{
    box-sizing:border-box;
}
body
{
    display:flex;
    flex-direction:column;
    height:100vh;
    margin:0;
    overflow:hidden;
    background:#d4d0c8;
    color:#111;
    font-family:"DejaVu Sans Condensed", "DejaVu Sans", sans-serif;
    font-size:10px;
    line-height:14px;
}
h1, h2, ul
{
    margin:0;
    padding:0;
    font-size:10px;
    list-style:none;
}
button, select, input
{
    margin:0;
    padding:0;
    border:none;
    border-radius:0;
    background:none;
    color:inherit;
    font:inherit;
}
svg
{
    display:block;
    flex:none;
}
.Sprite
{
    position:absolute;
    width:0;
    height:0;
}
.Icon
{
    width:16px;
    height:16px;
}

.Title
{
    display:flex;
    align-items:center;
    height:15px;
    padding:0 2px 2px 3px;
    background:linear-gradient(90deg, #24438c, #a6caf0);
    color:#fff;
}
.Title h1
{
    font-family:"Noto Sans", sans-serif;
    font-size:11px;
}
.Title > svg
{
    width:13px;
    height:13px;
    margin-right:2px;
}
.Caption
{
    display:flex;
    margin-left:auto;
}
.Caption button
{
    display:flex;
    align-items:center;
    justify-content:center;
    width:15px;
    height:13px;
    border:1px solid;
    border-color:#fff #444 #444 #fff;
    background:#d4d0c8;
}
.Caption svg
{
    width:9px;
    height:9px;
}
.Caption .Close
{
    margin-left:3px;
}
.Caption.Flat
{
    padding-top:6px;
}
.Caption.Flat button
{
    border:none;
    background:none;
}

.Chrome
{
    height:74px;
    border-bottom:2px solid #77756f;
    background:linear-gradient(90deg, #d6d2ca, #fbfaf9 75%);
}
.Menu
{
    display:flex;
    align-items:center;
    gap:14px;
    height:24px;
    padding:0 2px 0 0;
}
.Menu .Icon
{
    margin:0 -6px 0 -15px;
}
.Bars
{
    display:flex;
    height:24px;
}
.Bar
{
    display:flex;
    align-items:center;
    height:24px;
    margin-left:1px;
    border-bottom:1px solid #aaa69d;
    border-radius:4px;
    background:linear-gradient(#fdfdfc, #f0eeea 50%, #cdc9c0);
}
.Grip
{
    flex:none;
    width:2px;
    height:14px;
    margin:0 4px;
    background:repeating-linear-gradient(#8d897f 0 2px, transparent 2px 4px);
}
.Tool
{
    display:flex;
    flex:none;
    align-items:center;
    justify-content:center;
    width:21px;
    height:21px;
}
.Tool.On
{
    border:1px solid #27407e;
    background:#c4cad9;
}
.Tool.Wide
{
    gap:3px;
    width:33px;
}
.Tool.Fx
{
    color:#15158a;
    font-family:"Liberation Sans", sans-serif;
    font-size:12px;
    font-weight:bold;
}
.Drop
{
    display:flex;
    flex:none;
    justify-content:center;
    width:12px;
}
.Drop::after, .Arrow, .Combo::after
{
    content:"";
    border:3px solid transparent;
    border-top-color:#111;
    border-bottom:none;
}
.Drop.Off::after
{
    border-top-color:#999;
}
.Sep
{
    flex:none;
    width:6px;
    height:16px;
    background:linear-gradient(#aaa69d, #aaa69d) 2px 0 / 1px 100% no-repeat;
}
.End
{
    display:flex;
    align-items:flex-end;
    justify-content:center;
    width:10px;
    height:24px;
    margin-left:4px;
    padding-bottom:3px;
    border-radius:0 4px 4px 0;
    background:linear-gradient(#c4c1ba, #8d8a84);
}
.End::after
{
    content:"";
    width:6px;
    height:6px;
    border-top:1px solid #000;
    background:linear-gradient(#000, #000) 1px 2px / 5px 1px no-repeat, linear-gradient(#000, #000) 2px 3px / 3px 1px no-repeat;
}
.End.Apart
{
    margin-left:14px;
}
.Combo
{
    position:relative;
    flex:none;
    height:19px;
    margin-right:3px;
    border:1px solid #77756f;
    background:#fff;
}
.Combo::after
{
    position:absolute;
    top:8px;
    right:4px;
    pointer-events:none;
}
.Combo select
{
    appearance:none;
    display:block;
    width:100%;
    height:17px;
    padding-left:4px;
    background:linear-gradient(90deg, #77756f 1px, #f2f0ec 1px) 100% 0 / 14px 100% no-repeat;
    opacity:1;
}
.Combo.Scale
{
    width:61px;
    margin-left:2px;
}
.Combo.Step
{
    width:56px;
}
.Combo.Layer
{
    width:118px;
    background:#d4d0c8;
}
.Combo.Layer::after
{
    border-top-color:#999;
}
.Coords
{
    display:flex;
    gap:1px;
    padding-left:4px;
}
.Coords input
{
    width:46px;
    height:19px;
    border:1px solid #a39f96;
    background:#d4d0c8;
}

.Work
{
    display:flex;
    flex:1;
    min-height:0;
}
.Compact
{
    width:25px;
    padding-top:23px;
}
.Strip
{
    width:24px;
    border-radius:3px;
    background:linear-gradient(90deg, #fdfdfc, #f0eeea 50%, #c8c4bb);
}
.TopGrip
{
    display:block;
    width:14px;
    height:2px;
    margin:0 5px;
    border-top:3px solid transparent;
    box-sizing:content-box;
    background:repeating-linear-gradient(90deg, #8d897f 0 2px, transparent 2px 4px) padding-box;
}
.TopGrip + .Mode
{
    margin-top:3px;
}
.Mode
{
    display:flex;
    align-items:center;
    width:22px;
    height:16px;
    padding-left:7px;
    background:repeating-linear-gradient(#8d897f 0 2px, transparent 2px 4px) 4px 2px / 2px 12px no-repeat;
}
.Mode svg
{
    width:14px;
    height:14px;
}
.Mode.On
{
    width:16px;
    margin-left:6px;
    padding-left:0;
    border:1px solid #27407e;
    background:#c4cad9;
}
.Strip hr
{
    height:1px;
    margin:3px 5px;
    border:none;
    background:#8d897f;
}
.Mate
{
    display:flex;
    align-items:center;
    width:22px;
    height:21px;
    padding-left:3px;
}
.Mate svg
{
    width:18px;
    height:18px;
}
.Foot
{
    display:flex;
    justify-content:flex-end;
    height:10px;
    padding:2px 3px;
    border-radius:0 0 4px 4px;
    background:linear-gradient(90deg, #8d8a84, #d4d0c8);
}
.Foot svg
{
    width:6px;
    height:6px;
}

.Panel
{
    display:flex;
    flex-direction:column;
    width:274px;
    border-left:1px solid #f4f2ee;
}
.Panel header
{
    display:flex;
    align-items:center;
    gap:6px;
    height:16px;
    padding:0 5px 0 2px;
    background:linear-gradient(#f8f7f5, #cfcbc2);
}
.Panel h2
{
    margin-right:auto;
    font-weight:normal;
}
.Panel header svg
{
    width:9px;
    height:9px;
}
.PanelBar
{
    display:flex;
    align-items:center;
    height:25px;
    padding-left:1px;
    background:linear-gradient(#fdfdfc, #f0eeea 50%, #cdc9c0);
}
.TreeBox
{
    display:flex;
    flex:1;
    flex-direction:column;
    margin:2px 3px 5px 2px;
    padding:1px;
    border:2px solid #8d8a84;
    border-color:#8d8a84 #b5b1a8 #b5b1a8 #8d8a84;
    background:#fff;
}
.Tree
{
    display:grid;
    grid-auto-rows:1fr;
    height:563px;
    margin-bottom:auto;
    white-space:nowrap;
}
.Tree li
{
    display:flex;
    align-items:center;
}
.Tree svg
{
    width:16px;
    height:16px;
    margin:0 5px 0 3px;
}
.Tree i, .Tree b
{
    flex:none;
    align-self:stretch;
    width:22px;
    background:repeating-linear-gradient(#999 0 1px, transparent 1px 2px) 11px 0 / 1px 100% no-repeat;
}
.Tree .N
{
    background:none;
}
.Tree b
{
    display:flex;
    align-items:center;
    justify-content:center;
    background:repeating-linear-gradient(#999 0 1px, transparent 1px 2px) 11px 0 / 1px 100% no-repeat, repeating-linear-gradient(90deg, #999 0 1px, transparent 1px 2px) 11px 9px / 11px 1px no-repeat;
}
.Tree .Last
{
    background-size:1px 9px, 11px 1px;
}
.Tree button
{
    width:11px;
    height:11px;
    border:1px solid #8d8a84;
    background:linear-gradient(#000, #000) 1px 4px / 7px 1px no-repeat #fff;
}
.Tree .Plus
{
    background:linear-gradient(#000, #000) 1px 4px / 7px 1px no-repeat, linear-gradient(#000, #000) 4px 1px / 1px 7px no-repeat #fff;
}
.Scroll
{
    display:flex;
    height:16px;
    background:#e9e7e3;
}
.Scroll button, .Thumb
{
    display:flex;
    align-items:center;
    justify-content:center;
    width:15px;
    border:1px solid;
    border-color:#fff #55534e #55534e #fff;
    background:#d4d0c8;
}
.Scroll svg
{
    width:8px;
    height:8px;
}
.Thumb
{
    flex:1;
    margin-right:3px;
}
.Tabs
{
    height:19px;
    border-top:1px solid #222;
    background:linear-gradient(#fdfdfc, #cdc9c0);
}
.Tabs button
{
    width:70px;
    height:18px;
    border-right:1px solid #222;
    border-bottom:1px solid #222;
    background:#e9e7e0;
}

.View
{
    flex:1;
    min-width:0;
    margin-left:4px;
    border:1px solid #77756f;
    border-width:0 1px 0 2px;
    border-right-color:#d4d0c8;
    background:#fff;
}
.Model
{
    width:100%;
    height:100%;
}
.Axis
{
    font-size:10px;
}
.Status
{
    height:12px;
    padding:7px 0 0 30px;
}
.Status div
{
    height:5px;
    border-top:1px solid #8d8a84;
    border-left:1px solid #8d8a84;
    background:#f7f6f4;
}
```
